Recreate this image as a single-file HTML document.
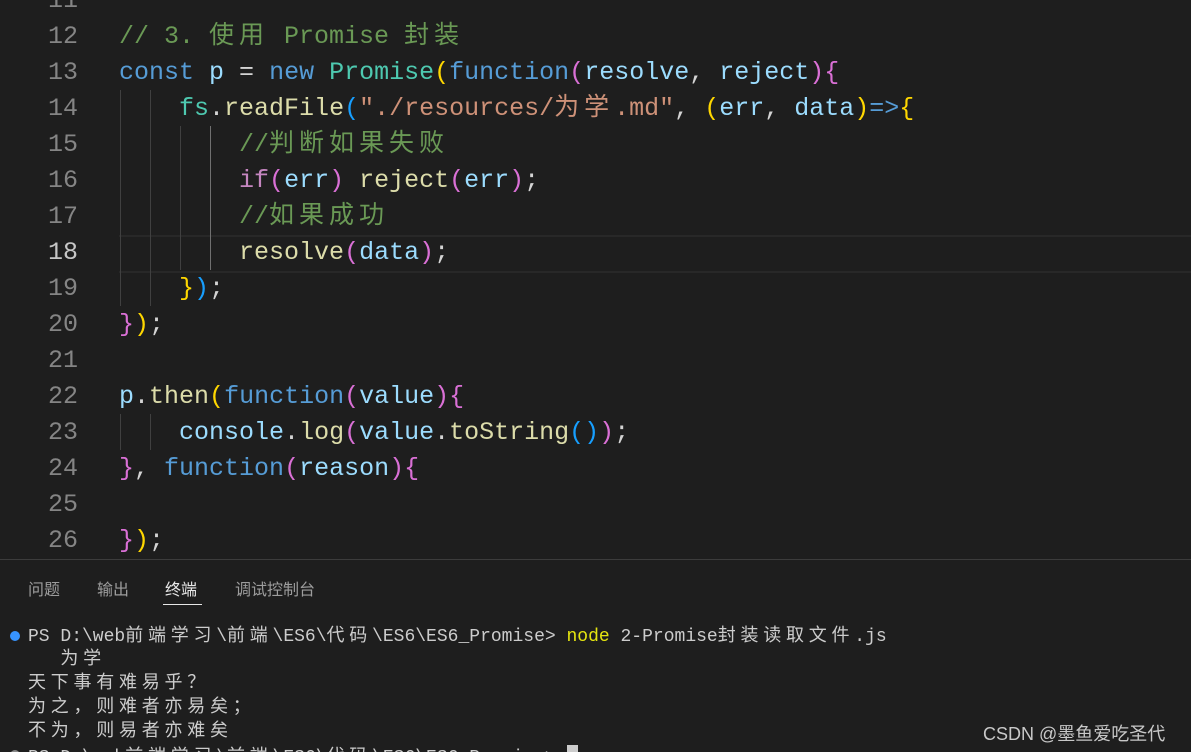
<!DOCTYPE html><html style="overflow:hidden;height:752px"><head><meta charset="utf-8"><style>
body{margin:0;width:1191px;height:752px;background:#1e1e1e;overflow:hidden;position:relative;font-family:"Liberation Mono","Noto Sans CJK SC",monospace}
.l{position:absolute;left:0;height:36px;line-height:36px;font-size:25px;white-space:pre;width:1191px}
.n{position:absolute;right:1113px;color:#858585}
.t{position:absolute;left:119px;color:#d4d4d4}
.z{letter-spacing:5px}
.g{position:absolute;width:1px;background:#404040}
.cm{color:#6a9955}.kw{color:#569cd6}.v{color:#9cdcfe}.f{color:#dcdcaa}.cl{color:#4ec9b0}.s{color:#ce9178}
.y{color:#ffd700}.p{color:#da70d6}.b{color:#179fff}
.term{position:absolute;left:28px;font-size:18px;color:#cccccc;white-space:pre;line-height:24px}
.tz{letter-spacing:4.75px}
.tab{position:absolute;top:576px;font-size:16px;color:#9d9d9d;font-family:"Liberation Sans","Noto Sans CJK SC",sans-serif}
</style></head><body>
<div style="position:absolute;left:119px;right:0;top:235px;height:34px;border-top:2px solid #282828;border-bottom:2px solid #282828"></div>
<div class="g" style="left:120px;top:90px;height:216px"></div>
<div class="g" style="left:150px;top:90px;height:216px"></div>
<div class="g" style="left:180px;top:126px;height:144px"></div>
<div class="g" style="left:210px;top:126px;height:144px;background:#707070"></div>
<div class="g" style="left:120px;top:414px;height:36px"></div>
<div class="g" style="left:150px;top:414px;height:36px"></div>
<div class="l" style="top:-17px"><span class="n">11</span></div>
<div class="l" style="top:19px"><span class="n">12</span><span class="t cm">// 3. <span class="z">使用</span> Promise <span class="z">封装</span></span></div>
<div class="l" style="top:55px"><span class="n">13</span><span class="t"><span class="kw">const</span> <span class="v">p</span> = <span class="kw">new</span> <span class="cl">Promise</span><span class="y">(</span><span class="kw">function</span><span class="p">(</span><span class="v">resolve</span>, <span class="v">reject</span><span class="p">){</span></span></div>
<div class="l" style="top:91px"><span class="n">14</span><span class="t">    <span class="cl">fs</span>.<span class="f">readFile</span><span class="b">(</span><span class="s">"./resources/<span class="z">为学</span>.md"</span>, <span class="y">(</span><span class="v">err</span>, <span class="v">data</span><span class="y">)</span><span class="kw">=&gt;</span><span class="y">{</span></span></div>
<div class="l" style="top:127px"><span class="n">15</span><span class="t cm">        //<span class="z">判断如果失败</span></span></div>
<div class="l" style="top:163px"><span class="n">16</span><span class="t">        <span style="color:#c586c0">if</span><span class="p">(</span><span class="v">err</span><span class="p">)</span> <span class="f">reject</span><span class="p">(</span><span class="v">err</span><span class="p">)</span>;</span></div>
<div class="l" style="top:199px"><span class="n">17</span><span class="t cm">        //<span class="z">如果成功</span></span></div>
<div class="l" style="top:235px"><span class="n" style="color:#c6c6c6">18</span><span class="t">        <span class="f">resolve</span><span class="p">(</span><span class="v">data</span><span class="p">)</span>;</span></div>
<div class="l" style="top:271px"><span class="n">19</span><span class="t">    <span class="y">}</span><span class="b">)</span>;</span></div>
<div class="l" style="top:307px"><span class="n">20</span><span class="t"><span class="p">}</span><span class="y">)</span>;</span></div>
<div class="l" style="top:343px"><span class="n">21</span></div>
<div class="l" style="top:379px"><span class="n">22</span><span class="t"><span class="v">p</span>.<span class="f">then</span><span class="y">(</span><span class="kw">function</span><span class="p">(</span><span class="v">value</span><span class="p">){</span></span></div>
<div class="l" style="top:415px"><span class="n">23</span><span class="t">    <span class="v">console</span>.<span class="f">log</span><span class="p">(</span><span class="v">value</span>.<span class="f">toString</span><span class="b">()</span><span class="p">)</span>;</span></div>
<div class="l" style="top:451px"><span class="n">24</span><span class="t"><span class="p">}</span>, <span class="kw">function</span><span class="p">(</span><span class="v">reason</span><span class="p">){</span></span></div>
<div class="l" style="top:487px"><span class="n">25</span></div>
<div class="l" style="top:523px"><span class="n">26</span><span class="t"><span class="p">}</span><span class="y">)</span>;</span></div>
<div style="position:absolute;left:0;right:0;top:559px;height:1px;background:#3c3c3c"></div>
<div class="tab" style="left:28px">问题</div>
<div class="tab" style="left:97px">输出</div>
<div class="tab" style="left:165px;color:#e7e7e7">终端</div>
<div style="position:absolute;left:163px;top:604px;width:39px;height:1px;background:#e7e7e7"></div>
<div class="tab" style="left:235px">调试控制台</div>
<div style="position:absolute;left:10px;top:631px;width:10px;height:10px;border-radius:50%;background:#3794ff"></div>
<div class="term" style="top:625px">PS D:\web<span class="tz">前端学习</span>\<span class="tz">前端</span>\ES6\<span class="tz">代码</span>\ES6\ES6_Promise&gt; <span style="color:#e5e510">node</span> 2-Promise<span class="tz">封装读取文件</span>.js</div>
<div class="term" style="top:648px">   <span class="tz">为学</span></div>
<div class="term" style="top:672px"><span class="tz">天下事有难易乎？</span></div>
<div class="term" style="top:696px"><span class="tz">为之，则难者亦易矣；</span></div>
<div class="term" style="top:720px"><span class="tz">不为，则易者亦难矣</span></div>
<div style="position:absolute;left:10px;top:750px;width:10px;height:10px;border-radius:50%;background:#888"></div>
<div class="term" style="top:746px">PS D:\web<span class="tz">前端学习</span>\<span class="tz">前端</span>\ES6\<span class="tz">代码</span>\ES6\ES6_Promise&gt; </div>
<div style="position:absolute;left:567px;top:745px;width:11px;height:10px;background:#ccc"></div>
<div style="position:absolute;left:983px;top:720px;font-size:18px;color:#c8c8c8;font-family:'Liberation Sans','Noto Sans CJK SC',sans-serif">CSDN @墨鱼爱吃圣代</div>
</body></html>
